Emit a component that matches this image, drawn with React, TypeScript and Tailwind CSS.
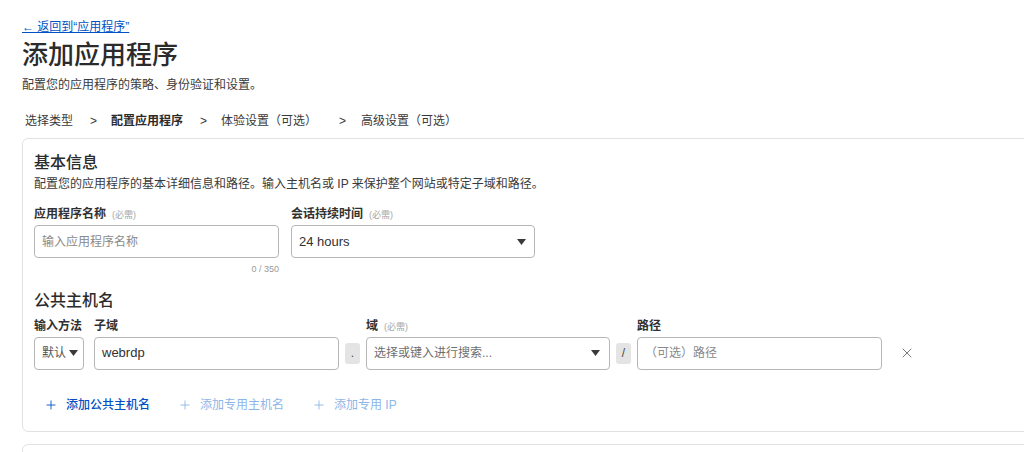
import { Plus, X } from "lucide-react";

const FONT = { fontFamily: '"Liberation Sans", "Noto Sans CJK SC", sans-serif' };

function Caret() {
  return (
    <svg width="9" height="6" viewBox="0 0 9 6" className="shrink-0">
      <path d="M0 0h9L4.5 6z" fill="#3a3a3a" />
    </svg>
  );
}

function Label({ text, required }: { text: string; required?: boolean }) {
  return (
    <div className="flex items-baseline gap-[6px] h-[16px] mb-[4px]">
      <span className="text-[12px] font-semibold text-[#313131]">{text}</span>
      {required && <span className="text-[9px] text-[#a6a6a6]">(必需)</span>}
    </div>
  );
}

function Field({ children, className }: { children: React.ReactNode; className?: string }) {
  return (
    <div
      className={
        "h-[33px] border border-[#b6b6b6] rounded-[4px] flex items-center px-[7px] text-[13px] bg-white " +
        (className ?? "")
      }
    >
      {children}
    </div>
  );
}

function Sep({ ch }: { ch: string }) {
  return (
    <div className="w-[15px] h-[21px] rounded-[3px] bg-[#e4e4e4] flex items-center justify-center text-[12px] text-[#4a4a4a]">
      {ch}
    </div>
  );
}

export default function App() {
  const steps = ["选择类型", "配置应用程序", "体验设置（可选）", "高级设置（可选）"];

  return (
    <div className="w-[1024px] h-[452px] overflow-hidden bg-white text-[#313131]" style={FONT}>
      <div className="pl-[22px] pt-[20px]">
        <a className="text-[12px] text-[#0051c3] underline leading-[14px] block">← 返回到“应用程序”</a>
        <h1 className="text-[26px] leading-[34px] mt-[4px] text-[#2b2b2b] font-medium">添加应用程序</h1>
        <p className="text-[12px] leading-[16px] mt-[5px] text-[#3a3a3a]">配置您的应用程序的策略、身份验证和设置。</p>

        <div className="flex items-center h-[18px] mt-[19px] pl-[3px] text-[12px] text-[#3a3a3a]">
          {steps.map((s, i) => (
            <div key={s} className="flex items-center">
              {i > 0 && (
                <span className={i === 3 ? "ml-[22px] mr-[15px]" : "ml-[17px] mr-[14px]"}>&gt;</span>
              )}
              <span className={i === 1 ? "font-semibold text-[#2b2b2b]" : ""}>{s}</span>
            </div>
          ))}
        </div>

        <div className="mt-[8px] w-[1040px] h-[294px] border border-[#e2e2e2] rounded-[6px] pl-[11px] pt-[14px]">
          <h2 className="text-[16px] leading-[20px] font-medium text-[#2b2b2b]">基本信息</h2>
          <p className="text-[12px] leading-[16px] mt-[3px] text-[#3a3a3a]">
            配置您的应用程序的基本详细信息和路径。输入主机名或 IP 来保护整个网站或特定子域和路径。
          </p>

          <div className="flex gap-[12px] mt-[13px]">
            <div className="w-[245px]">
              <Label text="应用程序名称" required />
              <Field>
                <span className="text-[#8a8a8a] text-[12px]">输入应用程序名称</span>
              </Field>
              <div className="text-right text-[9px] text-[#9a9a9a] mt-[5px]">0 / 350</div>
            </div>
            <div className="w-[244px]">
              <Label text="会话持续时间" required />
              <Field className="justify-between pr-[8px]">
                <span className="text-[#313131]">24 hours</span>
                <Caret />
              </Field>
            </div>
          </div>

          <h2 className="text-[16px] leading-[20px] font-medium text-[#2b2b2b] mt-[14px]">公共主机名</h2>

          <div className="flex items-end gap-[6px] mt-[6px]">
            <div className="w-[50px]">
              <Label text="输入方法" />
              <Field className="justify-between pr-[5px] px-[6px]">
                <span className="text-[12px] text-[#555]">默认</span>
                <Caret />
              </Field>
            </div>
            <div className="w-[245px] ml-[4px]">
              <Label text="子域" />
              <Field>
                <span>webrdp</span>
              </Field>
            </div>
            <div className="h-[33px] flex items-center">
              <Sep ch="." />
            </div>
            <div className="w-[244px]">
              <Label text="域" required />
              <Field className="justify-between pr-[9px]">
                <span className="text-[#6e6e6e] text-[12px]">选择或键入进行搜索...</span>
                <Caret />
              </Field>
            </div>
            <div className="h-[33px] flex items-center">
              <Sep ch="/" />
            </div>
            <div className="w-[245px]">
              <Label text="路径" />
              <Field>
                <span className="text-[#8a8a8a] text-[12px]">（可选）路径</span>
              </Field>
            </div>
            <div className="h-[33px] flex items-center ml-[11px]">
              <X size={16} strokeWidth={1.2} color="#555" />
            </div>
          </div>

          <div className="flex items-center mt-[26px] pl-[10px] text-[12px]">
            <div className="flex items-center gap-[8px] text-[#0051c3] font-medium">
              <Plus size={14} strokeWidth={1.5} />
              <span>添加公共主机名</span>
            </div>
            <div className="flex items-center gap-[8px] text-[#8cb6e8] ml-[28px]">
              <Plus size={14} strokeWidth={1.5} />
              <span>添加专用主机名</span>
            </div>
            <div className="flex items-center gap-[8px] text-[#8cb6e8] ml-[28px]">
              <Plus size={14} strokeWidth={1.5} />
              <span>添加专用 IP</span>
            </div>
          </div>
        </div>

        <div className="mt-[12px] w-[1040px] h-[60px] border border-[#e2e2e2] rounded-[6px]" />
      </div>
    </div>
  );
}
